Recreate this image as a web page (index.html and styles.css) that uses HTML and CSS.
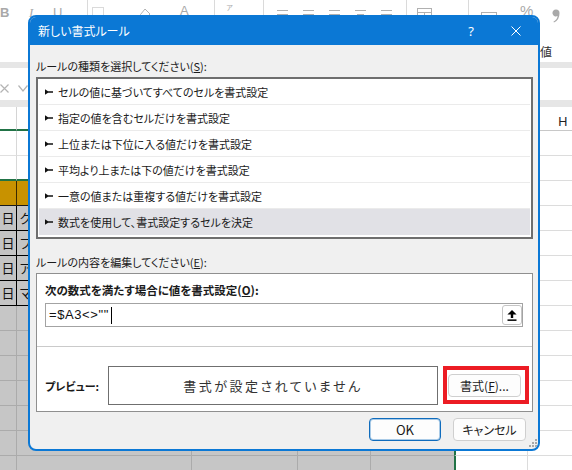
FILE: index.html
```html
<!DOCTYPE html>
<html lang="ja">
<head>
<meta charset="utf-8">
<title>新しい書式ルール</title>
<link rel="stylesheet" href="styles.css">
</head>
<body>
<div class="excel">
  <div class="ribbon">
    <div class="tools">
      <div class="slot s-b"><span class="t-b">B</span></div>
      <div class="slot s-i"><span class="t-i">I</span></div>
      <div class="slot s-u"><span class="t-u">U</span></div>
      <div class="slot s-sep"><span class="sep"></span></div>
      <div class="slot s-dots"><svg width="12" height="12" viewBox="0 0 12 12"><rect x="0.5" y="0.5" width="11" height="11" fill="none" stroke="#b4b4b4" stroke-dasharray="1 1"/></svg></div>
      <div class="slot s-brush"><svg width="11" height="12" viewBox="0 0 11 12"><path d="M5 1 L10 6 L5 11 L0.5 6.5 Z" fill="none" stroke="#b4b4b4"/></svg></div>
      <div class="slot s-a"><span class="t-a">A</span></div>
      <div class="slot s-sep2"><span class="sep"></span></div>
      <div class="slot s-kana"><span class="t-kana">ア</span></div>
      <div class="slot s-sep3"><span class="sep"></span></div>
      <div class="slot s-al"><svg class="al" width="11" height="10" viewBox="0 0 11 10"><path d="M0 1.5 H11 M0 5.5 H11 M0 9.5 H11" stroke="#b0b0b0"/></svg></div>
      <div class="slot s-al"><svg class="al" width="11" height="10" viewBox="0 0 11 10"><path d="M0 1.5 H11 M0 5.5 H11 M0 9.5 H11" stroke="#b0b0b0"/></svg></div>
      <div class="slot s-al"><svg class="al" width="11" height="10" viewBox="0 0 11 10"><path d="M0 1.5 H11 M0 5.5 H11 M0 9.5 H11" stroke="#b0b0b0"/></svg></div>
      <div class="slot s-al"><svg class="al" width="11" height="10" viewBox="0 0 11 10"><path d="M0 1.5 H11 M2 5.5 H9 M0 9.5 H11" stroke="#b0b0b0"/></svg></div>
      <div class="slot s-al2"><svg class="al" width="11" height="10" viewBox="0 0 11 10"><path d="M0 1.5 H11 M0 5.5 H11 M0 9.5 H11" stroke="#b0b0b0"/></svg></div>
      <div class="slot s-sep4"><span class="sep"></span></div>
      <div class="slot s-tab"><svg width="15" height="12" viewBox="0 0 15 12"><rect x="0.5" y="0.5" width="14" height="11" fill="none" stroke="#b0b0b0"/><path d="M0 4.5 H15 M7.5 4.5 V12" stroke="#b0b0b0"/></svg></div>
      <div class="slot s-sep5"><span class="sep"></span></div>
      <div class="slot s-calc"><svg width="16" height="10" viewBox="0 0 16 10"><rect x="0.5" y="0.5" width="15" height="9" fill="none" stroke="#b0b0b0"/><path d="M3 3.5 H13" stroke="#b0b0b0"/></svg></div>
      <div class="slot s-pct"><span class="t-pct">%</span></div>
      <div class="slot s-comma"><svg width="8" height="14" viewBox="0 0 8 14"><path d="M4 0.5 A3.5 3.5 0 1 0 5.6 7.1 Q5.2 10.6 1.4 12.8 L2 13.6 Q7.6 11 7.5 4 A3.5 3.5 0 0 0 4 0.5 Z" fill="#a9a9a9"/></svg></div>
    </div>
    <div class="grouprow">数値</div>
  </div>
  <div class="band"></div>
  <div class="fbar">
    <svg class="fx-x" width="9" height="9" viewBox="0 0 9 9"><path d="M0.5 0.5 L8.5 8.5 M8.5 0.5 L0.5 8.5" stroke="#b4b4b4" stroke-width="1.2"/></svg>
    <svg class="fx-ok" width="10" height="7" viewBox="0 0 10 7"><path d="M0.5 0.5 L5 6 L9.5 0.5" fill="none" stroke="#b4b4b4" stroke-width="1.2"/></svg>
  </div>
  <div class="band2"></div>
  <div class="sheet">
    <div class="row hdr"><div class="a"></div><div class="b"></div><div class="c"><span class="colname">H</span></div></div>
    <div class="row wrow"><div class="a"></div><div class="b"></div><div class="c"></div></div>
    <div class="row wrow w2"><div class="a"></div><div class="b"></div><div class="c"></div></div>
    <div class="row gold"><div class="a"></div><div class="b"></div><div class="c"></div></div>
    <div class="row drow"><div class="a">日</div><div class="b">ク</div><div class="c"></div></div>
    <div class="row drow"><div class="a">日</div><div class="b">フ</div><div class="c"></div></div>
    <div class="row drow"><div class="a">日</div><div class="b">ア</div><div class="c"></div></div>
    <div class="row drow"><div class="a">日</div><div class="b">マ</div><div class="c"></div></div>
    <div class="row grow"><div class="a"></div><div class="b"></div><div class="c"></div></div>
    <div class="row grow"><div class="a"></div><div class="b"></div><div class="c"></div></div>
    <div class="row grow"><div class="a"></div><div class="b"></div><div class="c"></div></div>
    <div class="row grow"><div class="a"></div><div class="b"></div><div class="c"></div></div>
    <div class="row grow"><div class="a"></div><div class="b"></div><div class="c"></div></div>
    <div class="row grow"><div class="a"></div><div class="b"></div><div class="c"></div></div>
    <div class="row grow"><div class="a"></div><div class="b"></div><div class="c"></div></div>
  </div>

  <div class="dialog">
    <div class="titlebar">
      <span class="title">新しい書式ルール</span>
      <span class="help">?</span>
      <svg class="close" width="10" height="10" viewBox="0 0 10 10"><path d="M0.5 0.5 L9.5 9.5 M9.5 0.5 L0.5 9.5" stroke="#ffffff" stroke-width="1"/></svg>
    </div>
    <div class="body">
      <div class="label l1">ルールの種類を選択してください(<u>S</u>):</div>
      <ul class="rules">
        <li><svg class="bullet" width="8" height="6" viewBox="0 0 8 6"><path d="M0 0.3 L3 2.2 H8 V3.8 H3 L0 5.7 Z"/></svg><span>セルの値に基づいてすべてのセルを書式設定</span></li>
        <li><svg class="bullet" width="8" height="6" viewBox="0 0 8 6"><path d="M0 0.3 L3 2.2 H8 V3.8 H3 L0 5.7 Z"/></svg><span>指定の値を含むセルだけを書式設定</span></li>
        <li><svg class="bullet" width="8" height="6" viewBox="0 0 8 6"><path d="M0 0.3 L3 2.2 H8 V3.8 H3 L0 5.7 Z"/></svg><span>上位または下位に入る値だけを書式設定</span></li>
        <li><svg class="bullet" width="8" height="6" viewBox="0 0 8 6"><path d="M0 0.3 L3 2.2 H8 V3.8 H3 L0 5.7 Z"/></svg><span>平均より上または下の値だけを書式設定</span></li>
        <li><svg class="bullet" width="8" height="6" viewBox="0 0 8 6"><path d="M0 0.3 L3 2.2 H8 V3.8 H3 L0 5.7 Z"/></svg><span>一意の値または重複する値だけを書式設定</span></li>
        <li class="selected"><svg class="bullet" width="8" height="6" viewBox="0 0 8 6"><path d="M0 0.3 L3 2.2 H8 V3.8 H3 L0 5.7 Z"/></svg><span>数式を使用して、書式設定するセルを決定</span></li>
      </ul>
      <div class="label l2">ルールの内容を編集してください(<u>E</u>):</div>
      <div class="group">
        <div class="glabel">次の数式を満たす場合に値を書式設定(<u>O</u>):</div>
        <div class="formula">
          <span class="ftext">=$A3&lt;&gt;""</span><span class="caret"></span>
          <button class="refbtn"><svg width="10" height="11" viewBox="0 0 10 11"><path d="M5 0 L9.6 4.6 H6.2 V8 H3.8 V4.6 H0.4 Z" fill="#000"/><rect x="0.5" y="9.4" width="9" height="1.5" fill="#000"/></svg></button>
        </div>
        <div class="divider"></div>
        <div class="preview-row">
          <div class="plabel">プレビュー:</div>
          <div class="preview">書式が設定されていません</div>
          <div class="highlight"><button class="fmtbtn">書式(<u>F</u>)...</button></div>
        </div>
      </div>
      <div class="actions">
        <button class="btn ok">OK</button>
        <button class="btn cancel">キャンセル</button>
      </div>
    </div>
    <svg class="grip" width="8" height="8" viewBox="0 0 8 8"><g fill="#a8a8a8"><rect x="6" y="0" width="2" height="2"/><rect x="3" y="3" width="2" height="2"/><rect x="6" y="3" width="2" height="2"/><rect x="0" y="6" width="2" height="2"/><rect x="3" y="6" width="2" height="2"/><rect x="6" y="6" width="2" height="2"/></g></svg>
  </div>
</div>
</body>
</html>
```
FILE: styles.css
```css
* { box-sizing: border-box; }
html, body { margin: 0; padding: 0; }
body {
  width: 572px;
  height: 470px;
  overflow: hidden;
  background: #ffffff;
  font-family: "Noto Sans CJK JP", "Noto Sans", sans-serif;
}
.excel {
  position: relative;
  width: 572px;
  height: 470px;
  overflow: hidden;
  background: #ffffff;
}

/* ribbon */
.ribbon { height: 62px; background: #ffffff; }
.tools { display: flex; height: 24px; color: #a9a9a9; }
.slot { flex: none; height: 24px; }
.s-b { width: 29px; padding-top: 7px; }
.s-i { width: 24px; padding-top: 7px; }
.s-u { width: 34px; padding-top: 7px; }
.s-sep { width: 5px; }
.s-dots { width: 48px; padding-top: 7px; }
.s-brush { width: 40px; padding-top: 8px; }
.s-a { width: 34px; padding-top: 5px; }
.s-sep2 { width: 12px; }
.s-kana { width: 37px; padding-top: 3px; }
.s-sep3 { width: 14px; }
.s-al { width: 26px; padding-top: 9px; }
.s-al2 { width: 25px; padding-top: 9px; }
.s-sep4 { width: 11px; }
.s-tab { width: 51px; padding-top: 8px; }
.s-sep5 { width: 13px; }
.s-calc { width: 39px; padding-top: 12px; }
.s-pct { width: 32px; padding-top: 3px; }
.s-comma { width: 20px; padding-top: 9px; }
.sep { display: block; width: 1px; height: 15px; background: #dadada; }
.tools svg { display: block; }
.t-b { display: block; font: bold 13px/12px "Liberation Sans", sans-serif; }
.t-i { display: block; font: italic 13px/12px "Liberation Serif", serif; }
.t-u { display: block; font: 13px/12px "Liberation Sans", sans-serif; text-decoration: underline; }
.t-a { display: block; font: 13px/12px "Liberation Sans", sans-serif; }
.t-kana { display: block; font: 7px/9px "Noto Sans CJK JP", sans-serif; }
.t-pct { display: block; font: 15px/16px "Liberation Sans", sans-serif; }
.grouprow {
  padding: 20px 0 0 528px;
  font-size: 12px;
  line-height: 16px;
  color: #333333;
  white-space: nowrap;
}

.band { height: 6px; background: #e6e6e6; }
.fbar {
  height: 32px;
  display: flex;
  align-items: center;
  padding-top: 8px;
}
.fx-x { display: block; }
.fx-ok { display: block; margin-left: 9px; }
.band2 { height: 7px; background: #e6e6e6; }

/* sheet */
.row { display: flex; height: 25px; }
.row > div { height: 100%; }
.a { width: 17px; flex: none; }
.b { width: 437px; flex: none; }
.c {
  flex: 1;
  border-bottom: 1px solid #dcdcdc;
  background: linear-gradient(#dcdcdc, #dcdcdc) 73px 0 / 1px 100% no-repeat, #ffffff;
}
.hdr { height: 24px; }
.hdr .a { border-right: 1px solid #d4d4d4; border-bottom: 2px solid #217346; }
.hdr .b { border-bottom: 2px solid #217346; }
.hdr .c { border-bottom: 1px solid #c8c8c8; padding-left: 104px; }
.colname { font: 13px/23px "Noto Sans", sans-serif; color: #222222; }
.wrow .a { border-right: 1px solid #d8d8d8; border-bottom: 1px solid #e0e0e0; }
.wrow .b { border-bottom: 1px solid #e0e0e0; }
.w2 .a, .w2 .b { border-bottom: 2px solid #217346; }
.gold .a, .gold .b { background: #c89200; border-bottom: 1px solid #1a1a1a; }
.gold .a { border-right: 1px solid #3a2a00; }
.drow .a, .drow .b {
  background: #c4c4c4;
  border-bottom: 1px solid #000000;
  font-size: 13px;
  line-height: 24px;
  color: #111111;
}
.drow .a { border-right: 1px solid #000000; text-align: center; }
.drow .b { padding-left: 2px; }
.grow .a {
  background: #c6c6c6;
  border-right: 1px solid #ababab;
  border-bottom: 1px solid #ababab;
}
.grow .b {
  border-bottom: 1px solid #ababab;
  background:
    linear-gradient(#ababab, #ababab) 174px 0 / 1px 100% no-repeat,
    linear-gradient(#ababab, #ababab) 280px 0 / 1px 100% no-repeat,
    linear-gradient(#ababab, #ababab) 353px 0 / 1px 100% no-repeat,
    #c6c6c6;
}
.grow .c { border-left: 2px solid #217346; background: linear-gradient(#dcdcdc, #dcdcdc) 71px 0 / 1px 100% no-repeat, #ffffff; }

/* dialog */
.dialog {
  position: absolute;
  left: 28px;
  top: 15px;
  width: 512px;
  height: 436px;
  border: 2px solid #0b78d5;
  border-radius: 8px;
  background: #f0f0f0;
  overflow: hidden;
  display: flex;
  flex-direction: column;
  font-family: "Noto Sans CJK JP", sans-serif;
  font-feature-settings: "palt";
  color: #1a1a1a;
}
.titlebar {
  flex: none;
  height: 28px;
  background: #0b78d5;
  color: #ffffff;
  display: flex;
  align-items: center;
  padding-left: 8px;
}
.title { font-size: 12px; line-height: 18px; }
.help { margin-left: auto; font: 13px/18px "Noto Sans", sans-serif; }
.close { display: block; margin-left: 37px; margin-right: 17px; }

.body {
  flex: 1;
  display: flex;
  flex-direction: column;
  padding: 0 5px 0 6px;
}
.label { height: 16px; font-size: 11px; line-height: 16px; white-space: nowrap; }
.l1 { margin-top: 13px; }
.rules {
  list-style: none;
  margin: 3px 0 0;
  padding: 0 1px 2px 1px;
  height: 162px;
  border: 2px solid #6e6e6e;
  background: #ffffff;
}
.rules li {
  height: 26px;
  display: flex;
  align-items: center;
  padding-left: 6px;
  border-bottom: 1px solid #ebebeb;
  font-size: 11px;
  white-space: nowrap;
}
.rules li:last-child { border-bottom: none; }
.rules li.selected { background: #e1e1e6; }
.bullet { flex: none; display: block; margin-right: 5px; fill: #111111; }

.l2 { margin-top: 15px; }
.group {
  margin-top: 3px;
  height: 139px;
  border: 1px solid #8f8f8f;
  background: #ffffff;
  display: flex;
  flex-direction: column;
}
.glabel {
  margin: 8px 0 0 8px;
  height: 16px;
  font-size: 11.5px;
  font-weight: bold;
  line-height: 16px;
  white-space: nowrap;
}
.formula {
  margin: 5px 9px 0 8px;
  height: 24px;
  border: 1px solid #a3a3a3;
  display: flex;
  align-items: center;
  padding-left: 3px;
}
.ftext { font: 13px/16px "Liberation Sans", sans-serif; letter-spacing: 0.6px; color: #111111; }
.caret { width: 1px; height: 17px; background: #000000; margin-left: 2px; }
.refbtn {
  margin-left: auto;
  width: 20px;
  height: 20px;
  padding: 0;
  border: 1px solid #c5c5c5;
  border-radius: 3px;
  background: #ffffff;
  display: flex;
  align-items: center;
  justify-content: center;
}
.refbtn svg { display: block; }
.divider { margin-top: 19px; height: 1px; background: #cacaca; }
.preview-row {
  margin-top: 19px;
  height: 39px;
  display: flex;
  align-items: center;
  padding-left: 8px;
}
.plabel { flex: none; width: 63px; font-size: 11px; font-weight: bold; white-space: nowrap; }
.preview {
  flex: none;
  width: 330px;
  height: 39px;
  border: 1px solid #6f6f6f;
  display: flex;
  align-items: center;
  justify-content: center;
  font-size: 13px;
  letter-spacing: 2.5px;
  color: #333333;
  white-space: nowrap;
}
.highlight {
  flex: none;
  align-self: flex-start;
  margin-left: 5px;
  width: 86px;
  height: 38px;
  border: 4px solid #ec1c24;
  padding: 4px 4px 3px 1px;
}
.fmtbtn, .btn {
  font-family: "Noto Sans CJK JP", sans-serif;
  font-feature-settings: "palt";
  font-size: 12px;
  color: #1a1a1a;
  border: 1px solid #cfcfcf;
  border-radius: 4px;
  background: #fdfdfd;
  padding: 0;
}
.fmtbtn { display: block; width: 73px; height: 23px; }
.actions {
  margin-top: 6px;
  display: flex;
  justify-content: flex-end;
  gap: 12px;
  padding-right: 7px;
}
.btn { width: 73px; height: 23px; }
.btn.ok {
  width: 72px;
  border-color: #0f6cbd;
  box-shadow: inset 0 0 0 1px rgba(15, 108, 189, 0.35);
  font-size: 13px;
}
.grip { position: absolute; right: 1px; bottom: 2px; display: block; }
```
